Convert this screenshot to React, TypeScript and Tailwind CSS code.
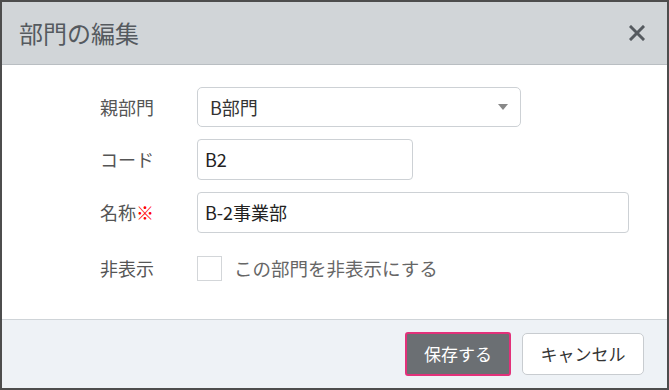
import React from "react";

const font = { fontFamily: '"Noto Sans CJK JP", "Noto Sans", sans-serif' };

function Row({ label, required, children }: { label: string; required?: boolean; children: React.ReactNode }) {
  return (
    <div className="flex items-center">
      <div className="w-[97px] text-[18px] text-[#555]">
        {label}
        {required && <span className="text-[#f00]">※</span>}
      </div>
      {children}
    </div>
  );
}

export default function App() {
  return (
    <div
      style={font}
      className="w-[669px] h-[390px] border-2 border-[#4d4d4d] bg-white flex flex-col overflow-hidden"
    >
      <div className="h-[63px] shrink-0 bg-[#d1d5d8] border-b border-[#b9bec2] flex items-center justify-between pl-[17px] pr-[22px]">
        <h2 className="text-[24px] text-[#555a5f] leading-none">部門の編集</h2>
        <svg width="16" height="16" viewBox="0 0 16 16" className="text-[#555a5f]">
          <path d="M2 2 L14 14 M14 2 L2 14" stroke="currentColor" strokeWidth="3" strokeLinecap="square" />
        </svg>
      </div>

      <div className="flex-1 pl-[98px] pt-[22px] flex flex-col gap-[12px]">
        <Row label="親部門">
          <div className="w-[324px] h-[40px] border border-[#cdd1d5] rounded-[5px] flex items-center justify-between pl-[12px] pr-[12px] text-[18px] text-[#333]">
            <span>B部門</span>
            <svg width="10" height="6" viewBox="0 0 10 6">
              <path d="M0 0 L10 0 L5 6 Z" fill="#888" />
            </svg>
          </div>
        </Row>
        <Row label="コード">
          <div className="w-[216px] h-[41px] border border-[#cdd1d5] rounded-[4px] flex items-center pl-[7px] text-[18px] text-[#222]">
            B2
          </div>
        </Row>
        <Row label="名称" required>
          <div className="w-[432px] h-[41px] border border-[#cdd1d5] rounded-[4px] flex items-center pl-[7px] text-[18px] text-[#222]">
            B-2事業部
          </div>
        </Row>
        <div className="mt-[10px]">
          <Row label="非表示">
            <div className="w-[25px] h-[25px] border border-[#d3d6d9] bg-white" />
            <span className="ml-[12px] text-[18.5px] text-[#666]">この部門を非表示にする</span>
          </Row>
        </div>
      </div>

      <div className="h-[69px] shrink-0 bg-[#eef2f6] border-t border-[#cfd4d8] flex items-center justify-end gap-[11px] pr-[23px]">
        <button className="w-[106px] h-[44px] border-2 border-[#e2317a] bg-[#6b6f73] text-white text-[17px] rounded-[3px]">
          保存する
        </button>
        <button className="w-[122px] h-[42px] border border-[#c8ccd0] bg-white text-[#333] text-[17px] rounded-[5px]">
          キャンセル
        </button>
      </div>
    </div>
  );
}
